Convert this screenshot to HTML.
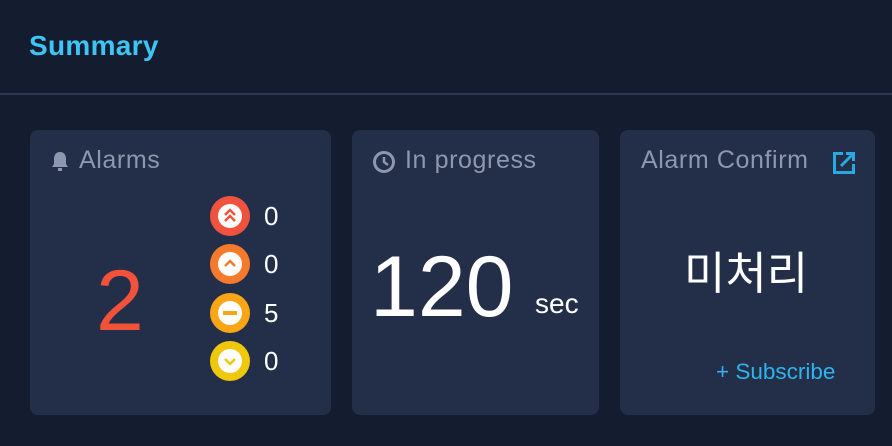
<!DOCTYPE html>
<html><head><meta charset="utf-8"><style>
*{margin:0;padding:0;box-sizing:border-box}
body{width:892px;height:446px;background:#141c30;font-family:"Liberation Sans","Noto Sans CJK KR",sans-serif;position:relative;overflow:hidden}
.t{position:absolute;left:29px;top:30px;color:#3ec5f5;font-weight:bold;font-size:28px;letter-spacing:0.3px}
.line{position:absolute;left:0;top:93px;width:892px;height:2px;background:#2c3650}
.c{position:absolute;top:130px;height:285px;background:#232f48;border-radius:8px}
.h{position:absolute;top:16px;font-size:25px;color:#8d97ad;white-space:nowrap;letter-spacing:0.6px}
.w{color:#fff;position:absolute;white-space:nowrap}
.ic{position:absolute;left:180px;width:40px;height:40px;border-radius:50%}
.ic i{position:absolute;left:8px;top:8px;width:24px;height:24px;border-radius:50%;background:#fff}
.n{position:absolute;left:234px;font-size:26px;color:#fff}
</style></head><body>
<div class="t">Summary</div>
<div class="line"></div>
<div class="c" style="left:30px;width:301px">
 <svg style="position:absolute;left:20px;top:20px" width="20" height="22" viewBox="0 0 20 22"><path d="M10 2c-4 0-6 3-6 7v5l-2 3h16l-2-3V9c0-4-2-7-6-7z" fill="#8d97ad"/><rect x="8" y="18" width="4" height="3" fill="#8d97ad"/></svg>
 <div class="h" style="left:49px">Alarms</div>
 <div class="w" style="left:66px;top:122px;font-size:86px;color:#f2513a">2</div>
 <div class="ic" style="top:66px;background:#f0533d"><i></i><svg style="position:absolute;left:10px;top:10px" width="20" height="20" viewBox="0 0 20 20" fill="none" stroke="#f0533d" stroke-width="2.5"><path d="M5 9l5-5 5 5M5 15l5-5 5 5"/></svg></div>
 <div class="n" style="top:71px">0</div>
 <div class="ic" style="top:114px;background:#f57a2e"><i></i><svg style="position:absolute;left:10px;top:10px" width="20" height="20" viewBox="0 0 20 20" fill="none" stroke="#f57a2e" stroke-width="2.5"><path d="M5 12l5-5 5 5"/></svg></div>
 <div class="n" style="top:119px">0</div>
 <div class="ic" style="top:163px;background:#f9a516"><i></i><div style="position:absolute;left:13px;top:18px;width:14px;height:4px;background:#f9a516"></div></div>
 <div class="n" style="top:168px">5</div>
 <div class="ic" style="top:211px;background:#efc70c"><i></i><svg style="position:absolute;left:10px;top:10px" width="20" height="20" viewBox="0 0 20 20" fill="none" stroke="#efc70c" stroke-width="2.5"><path d="M5 8l5 5 5-5"/></svg></div>
 <div class="n" style="top:216px">0</div>
</div>
<div class="c" style="left:352px;width:247px">
 <svg style="position:absolute;left:20px;top:20px" width="24" height="24" viewBox="0 0 24 24" fill="none" stroke="#8d97ad" stroke-width="3"><circle cx="12" cy="12" r="9.5"/><path d="M12 7v5l4 3" stroke-width="2.5"/></svg>
 <div class="h" style="left:53px">In progress</div>
 <div class="w" style="left:18px;top:108px;font-size:86px">120</div>
 <div class="w" style="left:183px;top:158px;font-size:28px">sec</div>
</div>
<div class="c" style="left:620px;width:255px">
 <div class="h" style="left:21px">Alarm Confirm</div>
 <svg style="position:absolute;left:211px;top:20px" width="26" height="26" viewBox="0 0 26 26" fill="none" stroke="#29a9e1" stroke-width="3"><path d="M12 3.5H3.5v19h19V14"/><path d="M10 16L22 4"/><path d="M15 3.5h7.5V11"/></svg>
 <div class="w" style="left:64px;top:107px;font-size:45px">미처리</div>
 <div class="w" style="left:96px;top:229px;font-size:22.5px;color:#2fb3ec">+ Subscribe</div>
</div>
</body></html>
